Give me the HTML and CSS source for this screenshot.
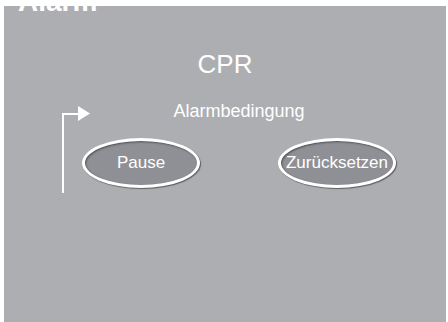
FILE: index.html
```html
<!DOCTYPE html>
<html lang="de">
<head>
    <meta charset="UTF-8">
    <meta name="viewport" content="width=device-width, initial-scale=1.0">
    <title>Alarm</title>
    <link rel="stylesheet" href="styles.css">
</head>
<body>
    <div class="panel">
        <h1 class="title">Alarm</h1>
        <h2 class="mode">CPR</h2>

        <div class="branch">
            <svg class="branch-arrow" width="30" height="88" viewBox="0 0 30 88" aria-hidden="true">
                <path d="M2 88 V9 H18" fill="none" stroke="#fff" stroke-width="2"/>
                <polygon points="17,1 29,8.5 17,16" fill="#fff"/>
            </svg>
            <div class="choices">
                <p class="condition">Alarmbedingung</p>
                <div class="actions">
                    <button class="oval">Pause</button>
                    <button class="oval">Zurücksetzen</button>
                </div>
            </div>
        </div>
    </div>
</body>
</html>
```

FILE: styles.css
```css
body {
    margin: 0;
    background-color: #fff;
    font-family: "Liberation Sans", Arial, sans-serif;
    color: #fff;
}
.panel {
    display: flow-root;
    margin: 6px 2px 0 4px;
    height: 316px;
    background-color: #adaeb2;
}
.title {
    margin: -18px 0 0 14px;
    font-size: 28px;
    line-height: 28px;
    font-weight: bold;
}
.mode {
    margin: 35px 0 0;
    font-size: 26px;
    line-height: 26px;
    font-weight: normal;
    text-align: center;
}
.branch {
    display: flex;
    margin-top: 25px;
    padding-left: 57px;
}
.branch-arrow {
    flex: none;
    margin-top: 3px;
}
.choices {
    width: 314px;
    margin-left: -9px;
}
.condition {
    margin: 0;
    font-size: 18px;
    line-height: 18px;
    text-align: center;
}
.actions {
    display: flex;
    justify-content: space-between;
    align-items: center;
    margin-top: 18px;
}
.oval {
    box-sizing: border-box;
    width: 118px;
    height: 50px;
    padding: 0;
    border: 3px solid #fff;
    border-radius: 50%;
    background-color: #8f9095;
    box-shadow: inset 1px 1px 2px #4e4f53, 1px 1px 1px #5e5f63;
    color: #fff;
    font-family: "Liberation Sans", Arial, sans-serif;
    font-size: 17px;
}
```
